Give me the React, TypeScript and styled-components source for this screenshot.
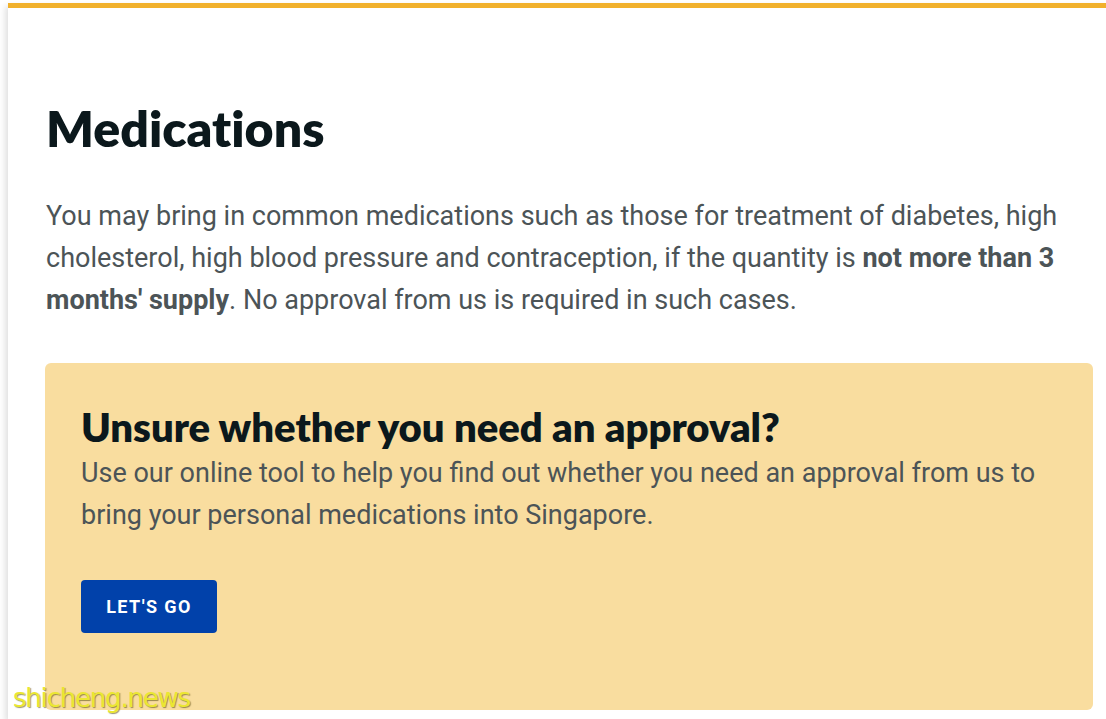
import React from "react";
import styled, { createGlobalStyle } from "styled-components";

const GlobalStyle = createGlobalStyle`
  html, body {
    margin: 0;
    padding: 0;
    background: #ffffff;
  }
  body {
    font-family: Roboto, "Liberation Sans", sans-serif;
  }
`;

const Page = styled.div`
  position: relative;
  height: 719px;
  overflow: hidden;
  padding: 3px 0 0 8px;
  box-sizing: border-box;
`;

const Sheet = styled.main`
  height: 100%;
  border-top: 5px solid #f1b12c;
  box-shadow: -3px 3px 6px rgba(0, 0, 0, 0.12);
  padding: 88px 13px 0 38px;
  box-sizing: border-box;
`;

const Title = styled.h1`
  margin: 0;
  font-family: Lato, sans-serif;
  font-weight: 800;
  font-variant-ligatures: none;
  font-size: 50px;
  line-height: 64px;
  color: #0b181c;
`;

const Lead = styled.p`
  margin: 35px 0 0;
  font-size: 27px;
  line-height: 42px;
  color: #4c5457;

  strong {
    font-weight: 700;
  }
`;

const Callout = styled.section`
  margin: 42px 0 0 -1px;
  height: 347px;
  background: #f9dd9f;
  border-radius: 6px;
  padding: 39px 36px 0;
  box-sizing: border-box;
`;

const CalloutTitle = styled.h2`
  margin: 0;
  font-family: Lato, sans-serif;
  font-weight: 800;
  font-variant-ligatures: none;
  font-size: 40px;
  line-height: 50px;
  color: #0b181c;
`;

const CalloutText = styled.p`
  margin: 0;
  font-size: 27px;
  line-height: 42px;
  color: #4c5457;
`;

const GoButton = styled.button`
  margin-top: 44px;
  width: 136px;
  height: 53px;
  border: 0;
  border-radius: 4px;
  background: #0141aa;
  color: #ffffff;
  font-family: Roboto, sans-serif;
  font-weight: 700;
  font-size: 18px;
  letter-spacing: 1.4px;
  cursor: pointer;
`;

const Watermark = styled.div`
  position: absolute;
  left: 13px;
  bottom: 6px;
  font-family: "DejaVu Sans", sans-serif;
  font-size: 26px;
  letter-spacing: -1.2px;
  color: #ebe732;
  text-shadow: 1px 1px 1px rgba(90, 80, 20, 0.6);
`;

export default function App() {
  return (
    <>
      <GlobalStyle />
      <Page>
        <Sheet>
          <Title>Medications</Title>
          <Lead>
            You may bring in common medications such as those for treatment of
            diabetes, high cholesterol, high blood pressure and contraception,
            if the quantity is <strong>not more than 3 months' supply</strong>.
            No approval from us is required in such cases.
          </Lead>
          <Callout>
            <CalloutTitle>Unsure whether you need an approval?</CalloutTitle>
            <CalloutText>
              Use our online tool to help you find out whether you need an
              approval from us to bring your personal medications into
              Singapore.
            </CalloutText>
            <GoButton>LET'S GO</GoButton>
          </Callout>
        </Sheet>
        <Watermark>shicheng.news</Watermark>
      </Page>
    </>
  );
}
